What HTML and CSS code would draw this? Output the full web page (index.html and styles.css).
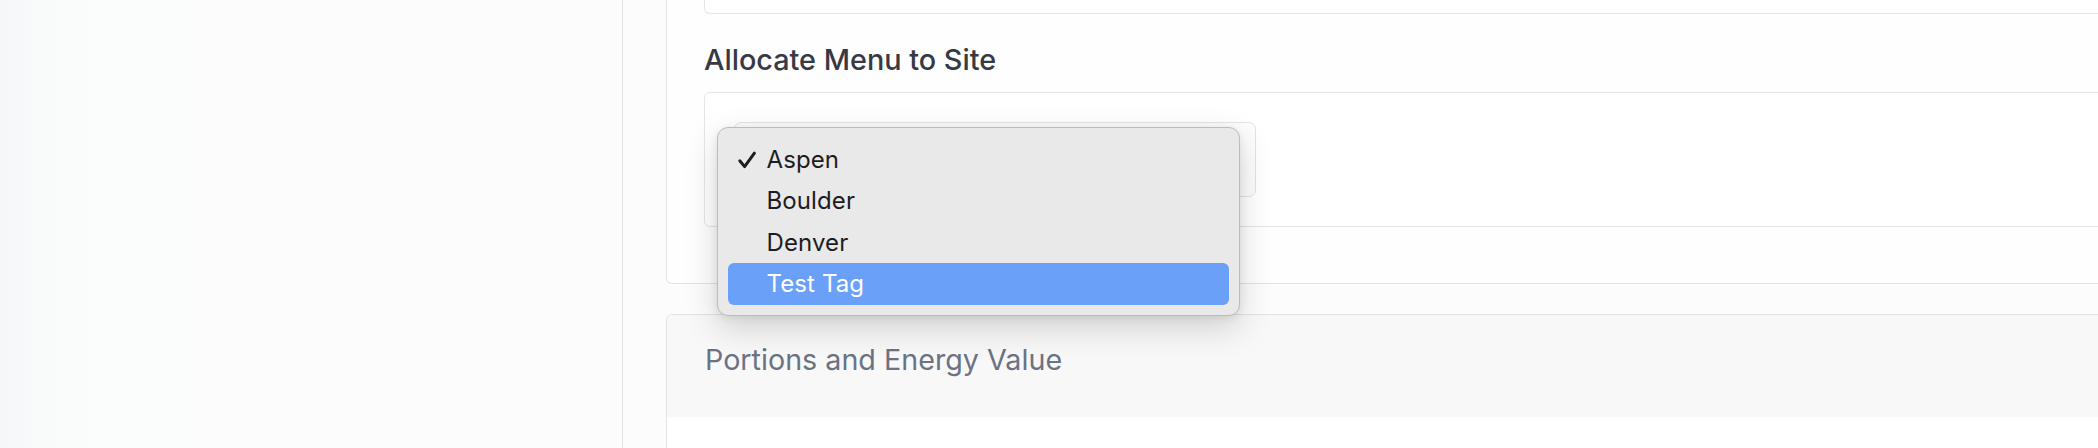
FILE: index.html
```html
<!DOCTYPE html>
<html lang="en">
<head>
<meta charset="utf-8">
<title>Allocate Menu to Site</title>
<link rel="stylesheet" href="styles.css">
</head>
<body>
<div class="layout">
  <aside class="sidebar"></aside>
  <main class="main">
    <section class="card card-alloc">
      <div class="top-box"></div>
      <h2 class="section-title">Allocate Menu to Site</h2>
      <div class="field-box">
        <div class="select-wrap">
          <div class="select-box"></div>
          <div class="popup" role="listbox">
            <div class="option selected"><span class="check"><svg viewBox="0 0 20 18" width="20" height="18"><path d="M2.8 9.8 L7.6 15.6 L17.4 2.2" fill="none" stroke="#1d1d1f" stroke-width="3" stroke-linecap="round" stroke-linejoin="round"/></svg></span><span class="label">Aspen</span></div>
            <div class="option"><span class="check"></span><span class="label">Boulder</span></div>
            <div class="option"><span class="check"></span><span class="label">Denver</span></div>
            <div class="option active"><span class="check"></span><span class="label">Test Tag</span></div>
          </div>
        </div>
      </div>
    </section>
    <section class="card card-portions">
      <div class="card-header">
        <h3 class="header-title">Portions and Energy Value</h3>
      </div>
      <div class="card-body"></div>
    </section>
  </main>
</div>
</body>
</html>
```
FILE: styles.css
```css
html, body {
  margin: 0;
  padding: 0;
}
body {
  width: 2098px;
  height: 448px;
  overflow: hidden;
  background: #fcfcfc;
  font-family: Inter, "Liberation Sans", sans-serif;
}
.layout {
  display: flex;
  height: 448px;
  overflow: hidden;
}
.sidebar {
  width: 622px;
  flex: none;
  background: linear-gradient(to right, #f5f7f9 0px, #f9fafa 40px, #fbfcfc 100px, #fcfcfc 200px);
  border-right: 1px solid #e2e2e2;
}
.main {
  flex: none;
  padding-left: 43px;
  margin-top: -50px;
}
.card {
  width: 1600px;
  border: 1px solid #e3e3e3;
  border-radius: 6px;
  background: #fefefe;
}
.card-alloc {
  padding: 0 0 56px 37px;
  border-top: none;
  border-top-left-radius: 0;
}
.top-box {
  height: 63px;
  border: 1px solid #e6e6e6;
  border-top: none;
  border-radius: 0 0 6px 6px;
  background: #ffffff;
}
.section-title {
  margin: 29px 0 15px 0;
  font-size: 28.8px;
  line-height: 34px;
  font-weight: 500;
  color: #373a45;
}
.field-box {
  border: 1px solid #e6e6e6;
  border-radius: 6px;
  padding: 29px 0 29px 29px;
  background: #ffffff;
}
.select-wrap {
  position: relative;
  width: 522px;
}
.select-box {
  height: 73px;
  border: 1px solid #e4e4e4;
  border-radius: 7px;
  background: #fdfdfd;
}
.popup {
  position: absolute;
  left: -17px;
  top: 5px;
  width: 501px;
  padding: 11px 10px 10px 10px;
  border: 1px solid #bcbcbc;
  border-radius: 11px;
  background: #e8e9e8;
  box-shadow: 0 12px 34px rgba(0, 0, 0, 0.16), 0 2px 8px rgba(0, 0, 0, 0.08);
}
.option {
  display: flex;
  align-items: center;
  height: 41.4px;
  border-radius: 6px;
  font-size: 24px;
  line-height: 41.4px;
  color: #1d1d1f;
  letter-spacing: 0.1px;
}
.check {
  width: 38.5px;
  flex: none;
  display: flex;
  justify-content: flex-end;
  padding-right: 10px;
  box-sizing: border-box;
}
.check svg {
  display: block;
}
.option.active {
  background: #6aa0f8;
  color: #ffffff;
}
.card-portions {
  margin-top: 30px;
  border-bottom: none;
}
.card-header {
  height: 102px;
  background: #f8f8f8;
  padding-left: 38px;
  border-radius: 6px 0 0 0;
}
.header-title {
  margin: 0;
  padding-top: 27px;
  font-size: 28.7px;
  line-height: 36px;
  font-weight: 400;
  color: #6b7383;
}
.card-body {
  height: 60px;
  background: #ffffff;
}
```
